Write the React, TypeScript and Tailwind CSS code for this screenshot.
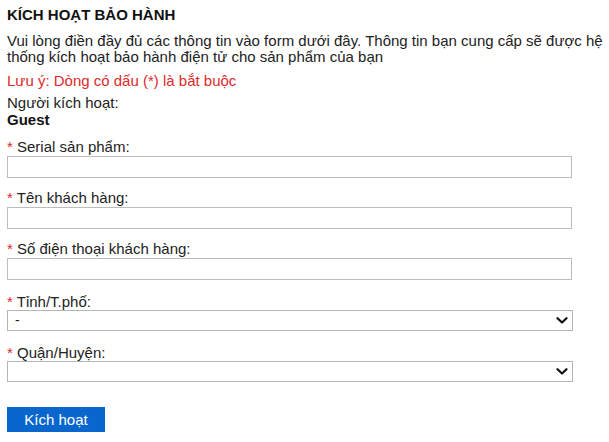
import { useState } from 'react'

const FONT = { fontFamily: '"Liberation Sans", Arial, sans-serif' }

function Label({ children }: { children: React.ReactNode }) {
  return (
    <label className="block text-[15px] leading-[16px] text-[#222]">
      <span className="text-[#e02a2a]">*</span> {children}
    </label>
  )
}

function Field({ label, className = '' }: { label: string; className?: string }) {
  return (
    <div className={className}>
      <Label>{label}</Label>
      <input
        type="text"
        className="mt-[1px] block h-[22px] w-[565px] border border-[#bdbdbd] bg-white px-1 text-[14px] outline-none"
      />
    </div>
  )
}

function SelectField({
  label,
  value,
  options,
  className = '',
}: {
  label: string
  value: string
  options: string[]
  className?: string
}) {
  const [v, setV] = useState(value)
  return (
    <div className={className}>
      <Label>{label}</Label>
      <div className="relative w-[566px]">
        <select
          value={v}
          onChange={(e) => setV(e.target.value)}
          className="block h-[21px] w-full appearance-none border border-[#b5b5b5] bg-white pl-[7px] text-[14px] leading-[19px] text-[#222] outline-none"
        >
          {options.map((o) => (
            <option key={o} value={o}>
              {o}
            </option>
          ))}
        </select>
        <svg
          className="pointer-events-none absolute right-[5px] top-[7px]"
          width="12"
          height="7"
          viewBox="0 0 12 7"
          fill="none"
          stroke="#111"
          strokeWidth="2.2"
          strokeLinecap="round"
          strokeLinejoin="round"
        >
          <path d="M1.5 1.2 6 5.5l4.5-4.3" />
        </svg>
      </div>
    </div>
  )
}

export default function App() {
  return (
    <div className="min-h-[442px] bg-white pl-[7px] pr-[2px] pt-[6px] text-[#222]" style={FONT}>
      <h1 className="text-[15px] font-bold leading-[17px] text-[#111]">KÍCH HOẠT BẢO HÀNH</h1>
      <p className="mt-[10px] text-[15px] leading-[16px]">
        Vui lòng điền đầy đủ các thông tin vào form dưới đây. Thông tin bạn cung cấp sẽ được hệ thống kích hoạt bảo
        hành điện tử cho sản phẩm của bạn
      </p>
      <p className="mt-[7px] text-[15px] leading-[17px] text-[#e02a2a]">Lưu ý: Dòng có dấu (*) là bắt buộc</p>
      <div className="mt-[5px] text-[15px] leading-[17px]">
        <div>Người kích hoạt:</div>
        <div className="font-bold text-[#111]">Guest</div>
      </div>

      <Field label="Serial sản phẩm:" className="mt-[11px]" />
      <Field label="Tên khách hàng:" className="mt-[12px]" />
      <Field label="Số điện thoại khách hàng:" className="mt-[12px]" />
      <SelectField label="Tỉnh/T.phố:" value="-" options={['-']} className="mt-[14px]" />
      <SelectField label="Quận/Huyện:" value="" options={['']} className="mt-[14px]" />

      <button
        type="button"
        className="mt-[25px] h-[25px] w-[98px] bg-[#0866cc] text-[15px] leading-[25px] text-white"
        style={FONT}
      >
        Kích hoạt
      </button>
    </div>
  )
}
